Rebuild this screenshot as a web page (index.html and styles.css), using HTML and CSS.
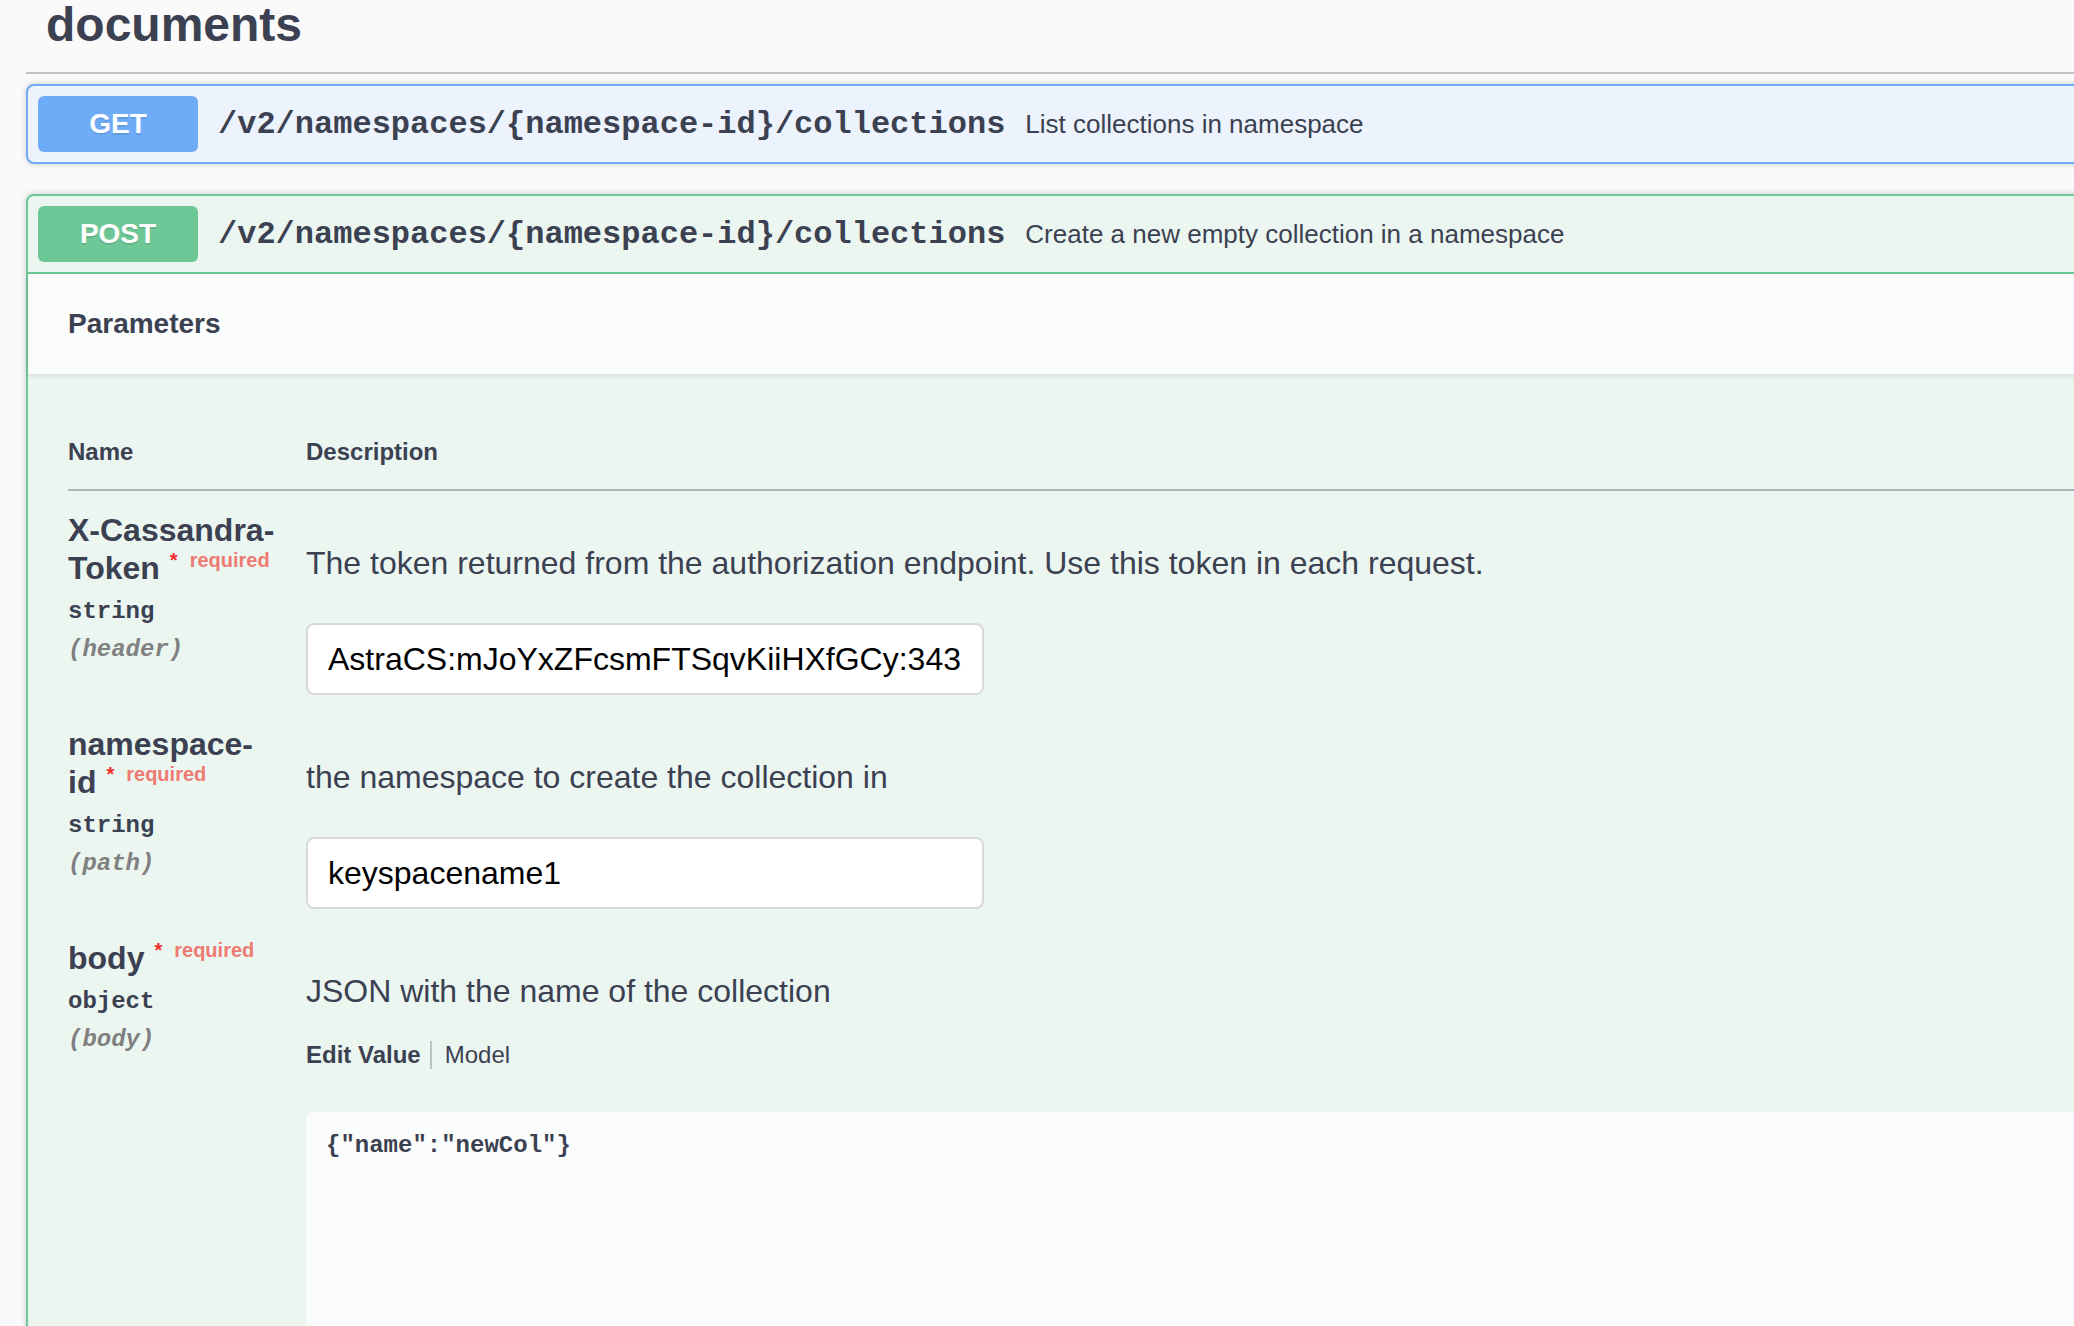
FILE: index.html
```html
<!DOCTYPE html>
<html lang="en">
<head>
<meta charset="utf-8">
<title>documents</title>
<link rel="stylesheet" href="styles.css">
</head>
<body>
<div class="page">
  <section class="tag-section">
    <h3 class="tag">documents</h3>

    <div class="opblock opblock-get">
      <div class="summary">
        <span class="method">GET</span>
        <span class="path">/v2/namespaces/{namespace-id}/collections</span>
        <span class="summary-desc">List collections in namespace</span>
      </div>
    </div>

    <div class="opblock opblock-post">
      <div class="summary">
        <span class="method">POST</span>
        <span class="path">/v2/namespaces/{namespace-id}/collections</span>
        <span class="summary-desc">Create a new empty collection in a namespace</span>
      </div>
      <div class="section-header">
        <h4>Parameters</h4>
      </div>
      <div class="table-container">
        <table class="params">
          <colgroup>
            <col class="col-name">
            <col>
          </colgroup>
          <thead>
            <tr>
              <th>Name</th>
              <th>Description</th>
            </tr>
          </thead>
          <tbody>
            <tr>
              <td class="name-cell">
                <div class="param-name">X-Cassandra-<br>Token<span class="star">*</span><span class="req">required</span></div>
                <div class="param-type">string</div>
                <div class="param-in">(header)</div>
              </td>
              <td class="desc-cell">
                <div class="desc-wrap">
                  <p class="desc">The token returned from the authorization endpoint. Use this token in each request.</p>
                  <input class="text-input" type="text" value="AstraCS:mJoYxZFcsmFTSqvKiiHXfGCy:343a9c1f0e6b7d2a5c8e4f1b3d6a9c2e5f8b1d4a7c0e3f6b9d2a5c8e1f4b7d0a">
                </div>
              </td>
            </tr>
            <tr>
              <td class="name-cell">
                <div class="param-name">namespace-<br>id<span class="star">*</span><span class="req">required</span></div>
                <div class="param-type">string</div>
                <div class="param-in">(path)</div>
              </td>
              <td class="desc-cell">
                <div class="desc-wrap">
                  <p class="desc">the namespace to create the collection in</p>
                  <input class="text-input" type="text" value="keyspacename1">
                </div>
              </td>
            </tr>
            <tr>
              <td class="name-cell">
                <div class="param-name">body<span class="star">*</span><span class="req">required</span></div>
                <div class="param-type">object</div>
                <div class="param-in">(body)</div>
              </td>
              <td class="desc-cell">
                <div class="desc-wrap">
                  <p class="desc">JSON with the name of the collection</p>
                  <ul class="tabs">
                    <li class="tab tab-active">Edit Value</li>
                    <li class="tab">Model</li>
                  </ul>
                  <textarea class="body-text" spellcheck="false">{"name":"newCol"}</textarea>
                </div>
              </td>
            </tr>
          </tbody>
        </table>
      </div>
    </div>
  </section>
</div>
</body>
</html>
```

FILE: styles.css
```css
html, body {
  margin: 0;
  padding: 0;
  background: #fafafa;
  overflow: hidden;
}

body {
  font-family: "Liberation Sans", Arial, sans-serif;
  color: #3b4151;
}

.page {
  width: 2400px;
  padding-left: 26px;
}

.tag {
  margin: -3px 0 10px;
  padding: 0 40px 20px 20px;
  font-size: 48px;
  font-weight: 700;
  line-height: normal;
  color: #3b4151;
  border-bottom: 2px solid rgba(59, 65, 81, 0.3);
}

.opblock {
  margin: 0 0 30px;
  border: 2px solid #000;
  border-radius: 8px;
  box-shadow: 0 0 6px rgba(0, 0, 0, 0.19);
}

.opblock-get {
  border-color: #6eacf7;
  background: #ecf3fc;
}

.opblock-post {
  border-color: #6ec796;
  background: #ecf6f1;
}

.summary {
  display: flex;
  align-items: center;
  padding: 10px;
}

.opblock-post .summary {
  border-bottom: 2px solid #6ec796;
}

.method {
  min-width: 160px;
  padding: 12px 0;
  border-radius: 6px;
  font-size: 28px;
  line-height: 32px;
  font-weight: 700;
  text-align: center;
  color: #fff;
  text-shadow: 0 2px 0 rgba(0, 0, 0, 0.1);
}

.opblock-get .method { background: #6eacf7; }
.opblock-post .method { background: #6ec796; }

.path {
  padding: 0 20px;
  font-family: "Liberation Mono", "Courier New", monospace;
  font-size: 32px;
  font-weight: 700;
  color: #3b4151;
}

.summary-desc {
  font-size: 26px;
  color: #3b4151;
}

.section-header {
  box-sizing: border-box;
  min-height: 100px;
  padding: 16px 40px;
  display: flex;
  align-items: center;
  background: rgba(255, 255, 255, 0.8);
  box-shadow: 0 2px 4px rgba(0, 0, 0, 0.1);
}

.section-header h4 {
  margin: 0;
  font-size: 28px;
  font-weight: 700;
  color: #3b4151;
}

.table-container {
  padding: 40px;
}

.params {
  width: 100%;
  border-collapse: collapse;
}

.col-name {
  width: 238px;
}

.params th {
  padding: 24px 0 23px;
  text-align: left;
  font-size: 24px;
  line-height: 28px;
  font-weight: 700;
  color: #3b4151;
  border-bottom: 2px solid rgba(59, 65, 81, 0.2);
}

.params td {
  vertical-align: top;
}

.name-cell {
  padding: 20px 0 0;
}

.desc-cell {
  padding: 20px 0 10px;
}

.desc-wrap {
  display: flex;
  flex-direction: column;
  align-items: flex-start;
}

.param-name {
  font-size: 32px;
  line-height: 38px;
  font-weight: 700;
  color: #3b4151;
}

.star {
  margin-left: 10px;
  font-size: 20px;
  line-height: 20px;
  vertical-align: 12px;
  color: #f52a2a;
}

.req {
  margin-left: 12px;
  font-size: 20px;
  line-height: 20px;
  vertical-align: 12px;
  color: #ee7b72;
}

.param-type {
  padding: 11px 0 10px;
  font-family: "Liberation Mono", "Courier New", monospace;
  font-size: 24px;
  line-height: 28px;
  font-weight: 700;
  color: #3b4151;
}

.param-in {
  font-family: "Liberation Mono", "Courier New", monospace;
  font-size: 24px;
  line-height: 28px;
  font-weight: 700;
  font-style: italic;
  color: gray;
}

.desc {
  margin: 28px 0 26px;
  font-size: 32px;
  line-height: 48px;
  color: #3b4151;
}

.text-input {
  display: block;
  box-sizing: border-box;
  width: 678px;
  height: 72px;
  margin: 10px 0 0;
  padding: 0 20px;
  border: 2px solid #d9d9d9;
  border-radius: 8px;
  background: #fff;
  font-family: "Liberation Sans", Arial, sans-serif;
  font-size: 32px;
  color: #000;
  outline: none;
}

.tabs {
  display: flex;
  margin: 0 0 43px;
  padding: 0;
  list-style: none;
}

.tab {
  font-size: 24px;
  line-height: 28px;
  color: #3b4151;
}

.tab-active {
  font-weight: 700;
  padding-right: 9px;
  border-right: 2px solid rgba(0, 0, 0, 0.2);
}

.tab + .tab {
  padding-left: 13px;
}

.body-text {
  display: block;
  box-sizing: border-box;
  align-self: stretch;
  width: 100%;
  min-height: 560px;
  margin: 0;
  padding: 20px;
  border: none;
  border-radius: 8px;
  outline: none;
  resize: none;
  background: rgba(255, 255, 255, 0.8);
  font-family: "Liberation Mono", "Courier New", monospace;
  font-size: 24px;
  font-weight: 700;
  color: #3b4151;
}
```
